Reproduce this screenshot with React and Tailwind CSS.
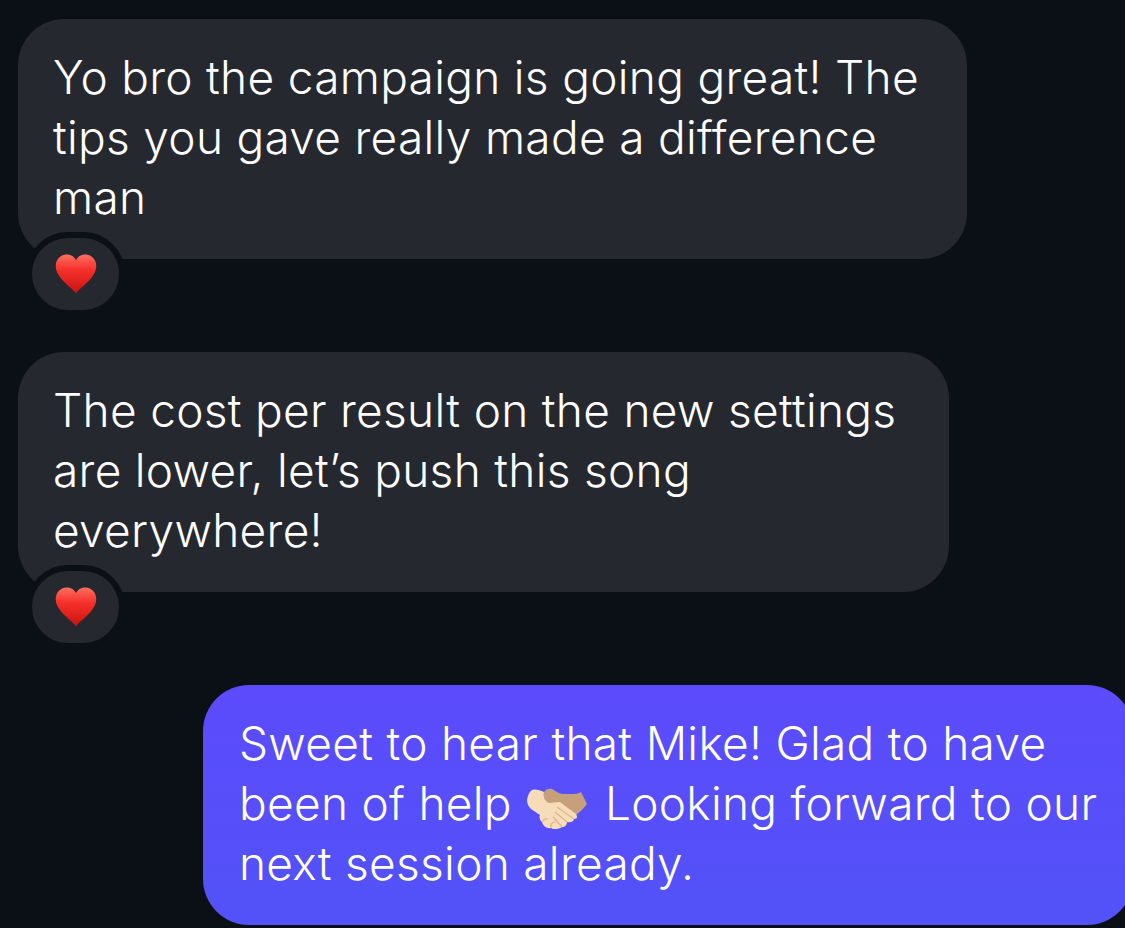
function Heart() {
  return (
    <svg width="42" height="42" viewBox="0 0 44 42">
      <defs>
        <linearGradient id="heartFill" x1="0" y1="0" x2="0" y2="1">
          <stop offset="0" stopColor="#ff6f60" />
          <stop offset="0.4" stopColor="#f5302a" />
          <stop offset="1" stopColor="#c9120f" />
        </linearGradient>
      </defs>
      <path
        d="M22 41.5 C18 35 1 26 0.8 13 C0.6 5.5 6 0.5 12.5 0.5 C17 0.5 20.5 3 22 6.5 C23.5 3 27 0.5 31.5 0.5 C38 0.5 43.4 5.5 43.2 13 C43 26 26 35 22 41.5 Z"
        fill="url(#heartFill)"
      />
    </svg>
  );
}

function Handshake() {
  return (
    <svg width="60" height="41" viewBox="0 0 60 41" className="ml-[15px] mr-[18px] inline-block align-[-9px]">
      <path d="M17 4 C19 1 22 0 25 1 C29 3 32 6 36 6 L47 6 C50 6 52 5 54 4 L60 16 C57 20 53 24 49 27 L34 15 L22 15 C17 14 15 8 17 4 Z" fill="#c6a07b" />
      <path
        d="M0 12 C1 7 2 4 5 2 C8 1 13 2 17 4 C16 8 17 13 22 15 L33 14 L49 26 C51 29 50 31 47 31 C47 33 44 35 40 34 C40 37 38 39 35 39 C32 41 27 42 24 40 C20 41 16 38 15 34 C13 33 12 29 13 27 L4 21 C1 18 0 15 0 12 Z"
        fill="#f6dcb9"
      />
      <path d="M30 19 L47 31 M28 24 L40 34 M26 29 L35 39" stroke="#dcb48e" strokeWidth="1.2" fill="none" />
      <path d="M15 34 C17 31 19 30 21 31 M24 40 C23 37 25 34 28 34" stroke="#dcb48e" strokeWidth="1.2" fill="none" />
    </svg>
  );
}

function Incoming({ width, children }) {
  return (
    <div className="relative pb-[57px]" style={{ width }}>
      <div className="rounded-[46px] bg-[#25282e] pb-[32px] pl-[35px] pt-[28px] text-white">{children}</div>
      <div className="absolute bottom-0 left-[8px] flex h-[84px] w-[99px] items-center justify-center rounded-[42px] border-[6px] border-[#0b0f16] bg-[#25282e]">
        <Heart />
      </div>
    </div>
  );
}

export default function App() {
  return (
    <div
      className="flex h-[928px] w-[1125px] flex-col overflow-hidden bg-[#0b0f16] pl-[18px] pt-[19px] text-[46px] font-light leading-[60px] tracking-[0.3px]"
      style={{ fontFamily: "Inter, sans-serif" }}
    >
      <Incoming width={949}>
        Yo bro the campaign is going great! The
        <br />
        tips you gave really made a difference
        <br />
        man
      </Incoming>
      <div className="mt-[36px]">
        <Incoming width={931}>
          The cost per result on the new settings
          <br />
          are lower, let’s push this song
          <br />
          everywhere!
        </Incoming>
      </div>
      <div className="ml-[185px] mt-[36px] w-[930px] shrink-0 rounded-[46px] bg-gradient-to-b from-[#5c4bfc] to-[#5252f8] pb-[32px] pl-[36px] pt-[28px] text-white">
        Sweet to hear that Mike! Glad to have
        <br />
        been of help
        <Handshake />
        Looking forward to our
        <br />
        next session already.
      </div>
    </div>
  );
}
